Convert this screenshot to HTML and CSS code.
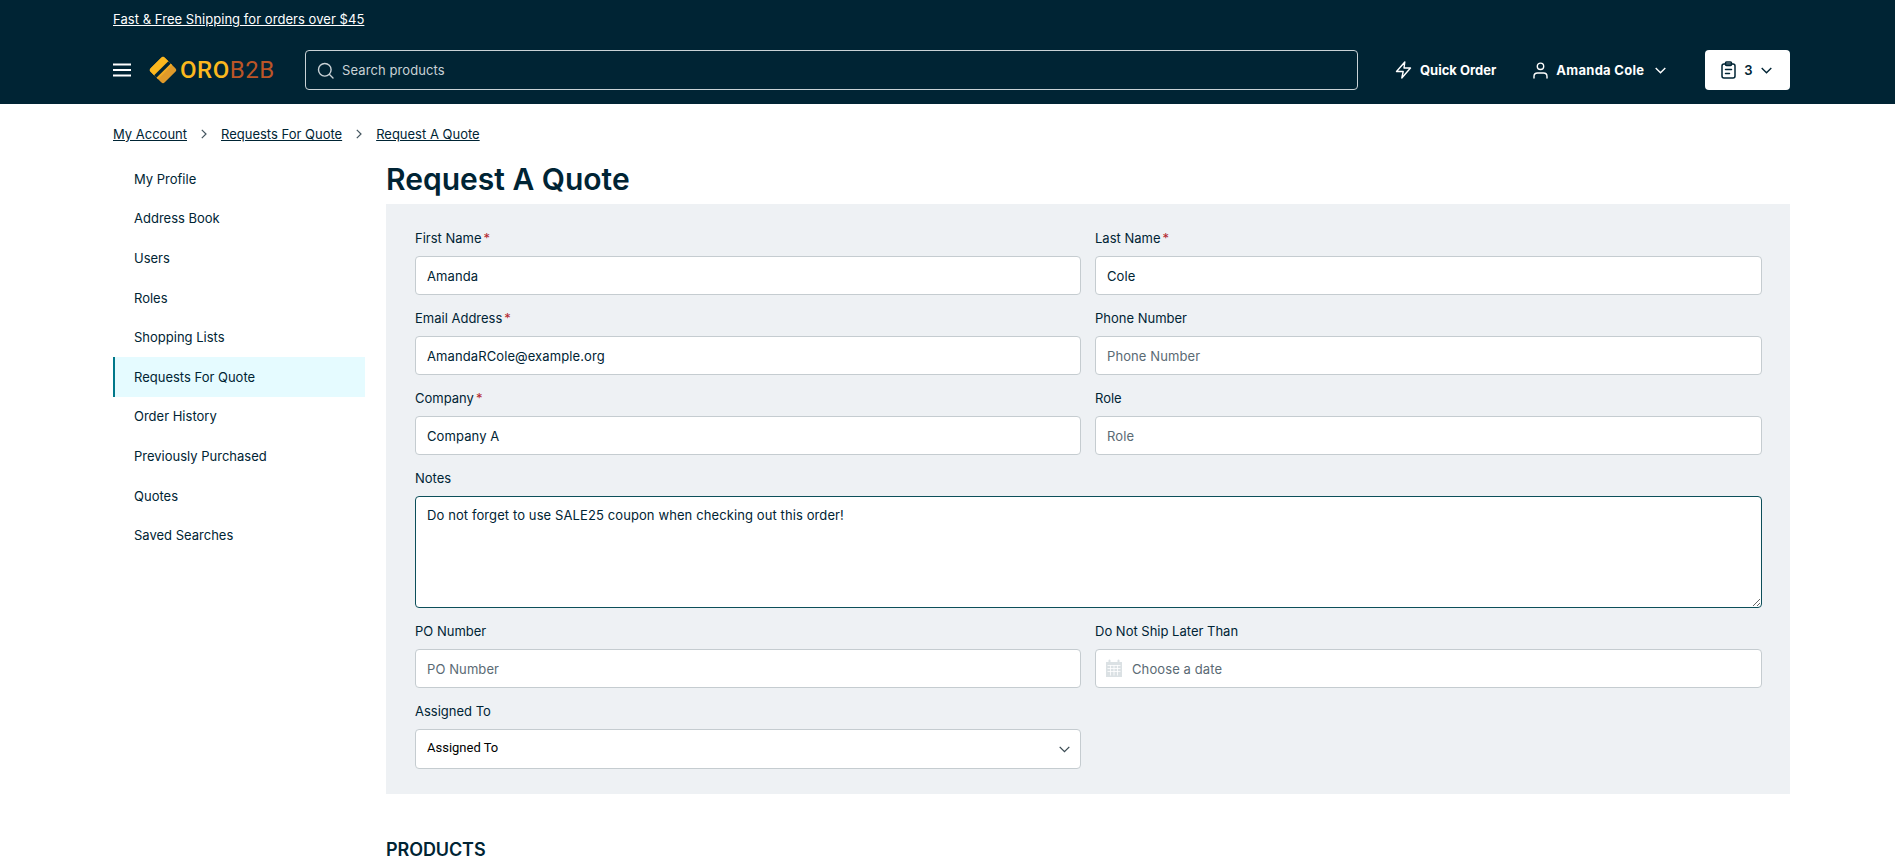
FILE: index.html
```html
<!DOCTYPE html>
<html lang="en">

<head>
    <meta charset="UTF-8">
    <meta name="viewport" content="width=device-width, initial-scale=1.0">
    <title>Request A Quote</title>
    <link rel="stylesheet" href="styles.css">
</head>

<body>
    <header class="site-header">
        <div class="promo"><a href="#">Fast &amp; Free Shipping for orders over $45</a></div>
        <div class="main-bar">
            <button class="menu-toggle" aria-label="Menu">
                <svg width="18" height="14" viewBox="0 0 18 14" fill="none" stroke="#fff" stroke-width="2"><path d="M0 1.500h18M0 7h18M0 12.500h18"/></svg>
            </button>
            <a class="logo" href="#">
                <svg width="28" height="28" viewBox="0 0 28 28">
                    <g transform="rotate(45 14 14)">
                        <rect x="4" y="4" width="20" height="20" rx="2.500" fill="#df9a2a"/>
                        <path d="M6.500 4H12v20H6.500A2.500 2.500 0 0 1 4 21.500v-15A2.500 2.500 0 0 1 6.500 4z" fill="#fbb81e"/>
                        <rect x="11.500" y="4" width="3.500" height="20" fill="#002434"/>
                        <rect x="15" y="4" width="2" height="20" fill="#f0ab22"/>
                    </g>
                </svg>
                <span class="logo-text"><span class="logo-oro">ORO</span><span class="logo-b2b">B2B</span></span>
            </a>
            <div class="search">
                <svg width="17" height="17" viewBox="0 0 17 17" fill="none" stroke="#c9d2d6" stroke-width="1.400" stroke-linecap="round"><circle cx="7.800" cy="7.800" r="6.300"/><path d="m12.500 12.500 3.500 3.500"/></svg>
                <input type="text" placeholder="Search products">
            </div>
            <a class="nav-link quick-order" href="#">
                <svg width="17" height="18" viewBox="0 0 17 18" fill="none" stroke="#fff" stroke-width="1.400" stroke-linejoin="round"><path d="M9.800 1 1.500 10.500h6.700L6.800 17l8.700-10H9z"/></svg>
                Quick Order
            </a>
            <a class="nav-link user-menu" href="#">
                <svg width="15" height="17" viewBox="0 0 15 17" fill="none" stroke="#fff" stroke-width="1.400" stroke-linecap="round"><circle cx="7.500" cy="4.300" r="3.200"/><path d="M1 16v-1.500C1 12.500 2.500 11 4.500 11h6c2 0 3.500 1.500 3.500 3.500V16"/></svg>
                Amanda Cole
                <svg class="chevron" width="11" height="7" viewBox="0 0 11 7" fill="none" stroke="#fff" stroke-width="1.400"><path d="m.7.900 4.800 4.800L10.300.9"/></svg>
            </a>
            <button class="cart-btn">
                <svg width="15" height="18" viewBox="0 0 15 18" fill="none" stroke="#002434" stroke-width="1.500" stroke-linecap="round" stroke-linejoin="round"><rect x="1" y="3" width="13" height="14" rx="2"/><rect x="4.500" y="1" width="6" height="3.500" rx="1"/><path d="M4.500 8.500h6M4.500 12.500h4"/></svg>
                <span>3</span>
                <svg width="11" height="7" viewBox="0 0 11 7" fill="none" stroke="#002434" stroke-width="1.400"><path d="m.7.900 4.800 4.800L10.300.9"/></svg>
            </button>
        </div>
    </header>

    <div class="page">
        <nav class="breadcrumbs">
            <a href="#">My Account</a>
            <svg width="6" height="10" viewBox="0 0 6 10" fill="none" stroke="#44555f" stroke-width="1.200"><path d="m.8.800 4.200 4.200-4.200 4.200"/></svg>
            <a href="#">Requests For Quote</a>
            <svg width="6" height="10" viewBox="0 0 6 10" fill="none" stroke="#44555f" stroke-width="1.200"><path d="m.8.800 4.200 4.200-4.200 4.200"/></svg>
            <a href="#">Request A Quote</a>
        </nav>

        <div class="columns">
            <aside class="sidebar">
                <a href="#">My Profile</a>
                <a href="#">Address Book</a>
                <a href="#">Users</a>
                <a href="#">Roles</a>
                <a href="#">Shopping Lists</a>
                <a href="#" class="active">Requests For Quote</a>
                <a href="#">Order History</a>
                <a href="#">Previously Purchased</a>
                <a href="#">Quotes</a>
                <a href="#">Saved Searches</a>
            </aside>

            <main class="content">
                <h1>Request A Quote</h1>
                <form class="quote-form">
                    <div class="field">
                        <label>First Name<em>*</em></label>
                        <input type="text" value="Amanda">
                    </div>
                    <div class="field">
                        <label>Last Name<em>*</em></label>
                        <input type="text" value="Cole">
                    </div>
                    <div class="field">
                        <label>Email Address<em>*</em></label>
                        <input type="text" value="AmandaRCole@example.org">
                    </div>
                    <div class="field">
                        <label>Phone Number</label>
                        <input type="text" placeholder="Phone Number">
                    </div>
                    <div class="field">
                        <label>Company<em>*</em></label>
                        <input type="text" value="Company A">
                    </div>
                    <div class="field">
                        <label>Role</label>
                        <input type="text" placeholder="Role">
                    </div>
                    <div class="field wide">
                        <label>Notes</label>
                        <textarea>Do not forget to use SALE25 coupon when checking out this order!</textarea>
                    </div>
                    <div class="field">
                        <label>PO Number</label>
                        <input type="text" placeholder="PO Number">
                    </div>
                    <div class="field">
                        <label>Do Not Ship Later Than</label>
                        <div class="date-input">
                            <svg width="18" height="18" viewBox="0 0 18 18"><path d="M1 3h2.500V1.500a1 1 0 0 1 2 0V3h7V1.500a1 1 0 0 1 2 0V3H17v15H1z" fill="#dbe1e4"/><path d="M2.500 6.500h13M2.500 9.500h13M2.500 12.500h13M5.500 6v10.500M9 6v10.500M12.500 6v10.500" stroke="#fff" stroke-width=".8"/></svg>
                            <input type="text" placeholder="Choose a date">
                        </div>
                    </div>
                    <div class="field">
                        <label>Assigned To</label>
                        <div class="select-wrap">
                            <select>
                                <option>Assigned To</option>
                            </select>
                            <svg width="11" height="7" viewBox="0 0 11 7" fill="none" stroke="#3a4a52" stroke-width="1.300"><path d="m.7.900 4.800 4.800L10.300.9"/></svg>
                        </div>
                    </div>
                </form>
                <h2>PRODUCTS</h2>
            </main>
        </div>
    </div>
</body>

</html>
```

FILE: styles.css
```css
body {
    font-family: 'Inter', 'Liberation Sans', sans-serif;
    font-size: 13px;
    color: #002434;
    margin: 0;
    padding: 0;
    overflow: hidden;
}

a {
    color: inherit;
}

/* header */
.site-header {
    height: 104px;
    box-sizing: border-box;
    padding: 0 105px 0 113px;
    background-color: #002434;
    color: #fff;
}

.promo {
    height: 50px;
    padding-top: 10px;
    box-sizing: border-box;
    font-size: 13px;
    line-height: 18px;
    letter-spacing: .05px;
}

.main-bar {
    display: flex;
    align-items: center;
    height: 40px;
}

.menu-toggle {
    display: flex;
    padding: 0;
    border: none;
    background: none;
    margin-right: 18px;
}

.logo {
    display: flex;
    align-items: center;
    width: 156px;
    text-decoration: none;
}

.logo-text {
    font-family: 'Roboto', sans-serif;
    font-size: 24px;
    font-weight: 500;
    line-height: 28px;
    letter-spacing: .5px;
    margin-left: 3px;
}

.logo-oro {
    color: #fbb81e;
}

.logo-b2b {
    color: #bb5527;
    font-weight: 400;
}

.search {
    display: flex;
    align-items: center;
    gap: 8px;
    width: 1053px;
    height: 40px;
    box-sizing: border-box;
    padding-left: 11px;
    border: 1px solid #c9d2d6;
    border-radius: 4px;
}

.search input {
    flex-grow: 1;
    border: none;
    outline: none;
    padding: 0;
    background: none;
    color: #fff;
    font: inherit;
    letter-spacing: .1px;
}

.search input::placeholder {
    color: #c9d2d6;
    opacity: 1;
}

.nav-link {
    display: flex;
    align-items: center;
    font-weight: 700;
    font-size: 13px;
    color: #fff;
    text-decoration: none;
}

.quick-order {
    gap: 8px;
    margin-left: 37px;
}

.user-menu {
    gap: 8px;
    margin-left: 37px;
    letter-spacing: .3px;
}

.user-menu .chevron {
    margin-left: 3px;
}

.cart-btn {
    display: flex;
    align-items: center;
    justify-content: center;
    gap: 8px;
    width: 85px;
    height: 40px;
    margin-left: auto;
    padding: 0 2px 0 0;
    border: none;
    border-radius: 4px;
    background-color: #fff;
    color: #002434;
    font: inherit;
    font-weight: 600;
}

/* page */
.page {
    padding: 0 105px 0 113px;
}

.breadcrumbs {
    display: flex;
    align-items: center;
    gap: 14px;
    height: 60px;
    font-size: 13px;
}

.columns {
    display: flex;
    margin-top: -5px;
}

.sidebar {
    flex: 0 0 252px;
    margin-right: 21px;
}

.sidebar a {
    display: flex;
    align-items: center;
    height: 39.600px;
    padding-left: 21px;
    box-sizing: border-box;
    text-decoration: none;
}

.sidebar a.active {
    padding-left: 19px;
    border-left: 2px solid #00788a;
    background-color: #e5fbff;
}

.content {
    flex-grow: 1;
}

h1 {
    margin: 0;
    height: 45px;
    font-size: 30px;
    line-height: 40px;
    font-weight: 600;
}

.quote-form {
    display: grid;
    grid-template-columns: 666px 667px;
    column-gap: 14px;
    padding: 25px 28px 25px 29px;
    background-color: #eef1f4;
}

.field {
    display: flex;
    flex-direction: column;
    padding-bottom: 14px;
}

.field:nth-last-child(1) {
    padding-bottom: 0;
}

.field.wide {
    grid-column: 1 / -1;
}

.field label {
    height: 27px;
    line-height: 18px;
    font-size: 13px;
}

.field label em {
    font-style: normal;
    margin-left: 2px;
    color: #b3262e;
}

.field input,
.field select,
.date-input,
.select-wrap {
    box-sizing: border-box;
    width: 100%;
    height: 39px;
}

.field input,
.field textarea,
.field select {
    padding: 0 11px;
    border: 1px solid #c5ccd0;
    border-radius: 4px;
    background-color: #fff;
    color: #002434;
    font: inherit;
    letter-spacing: .1px;
}

.field input::placeholder {
    color: #5a6a74;
    opacity: 1;
}

.field textarea {
    display: block;
    box-sizing: border-box;
    height: 112px;
    padding-top: 9px;
    border-color: #0c4f5a;
    line-height: 18px;
}

.date-input,
.select-wrap {
    position: relative;
}

.date-input svg {
    position: absolute;
    left: 10px;
    top: 10px;
}

.date-input input {
    padding-left: 36px;
}

.select-wrap,
.select-wrap select {
    height: 40px;
}

.select-wrap select {
    padding-bottom: 3px;
    appearance: none;
    font-family: 'Roboto', sans-serif;
    font-weight: 400;
    letter-spacing: 0;
    color: #000;
}

.select-wrap svg {
    position: absolute;
    right: 11px;
    top: 17px;
    pointer-events: none;
}

h2 {
    margin: 43px 0 0;
    font-size: 18px;
    line-height: 26px;
    font-weight: 600;
    letter-spacing: -.1px;
}
```
